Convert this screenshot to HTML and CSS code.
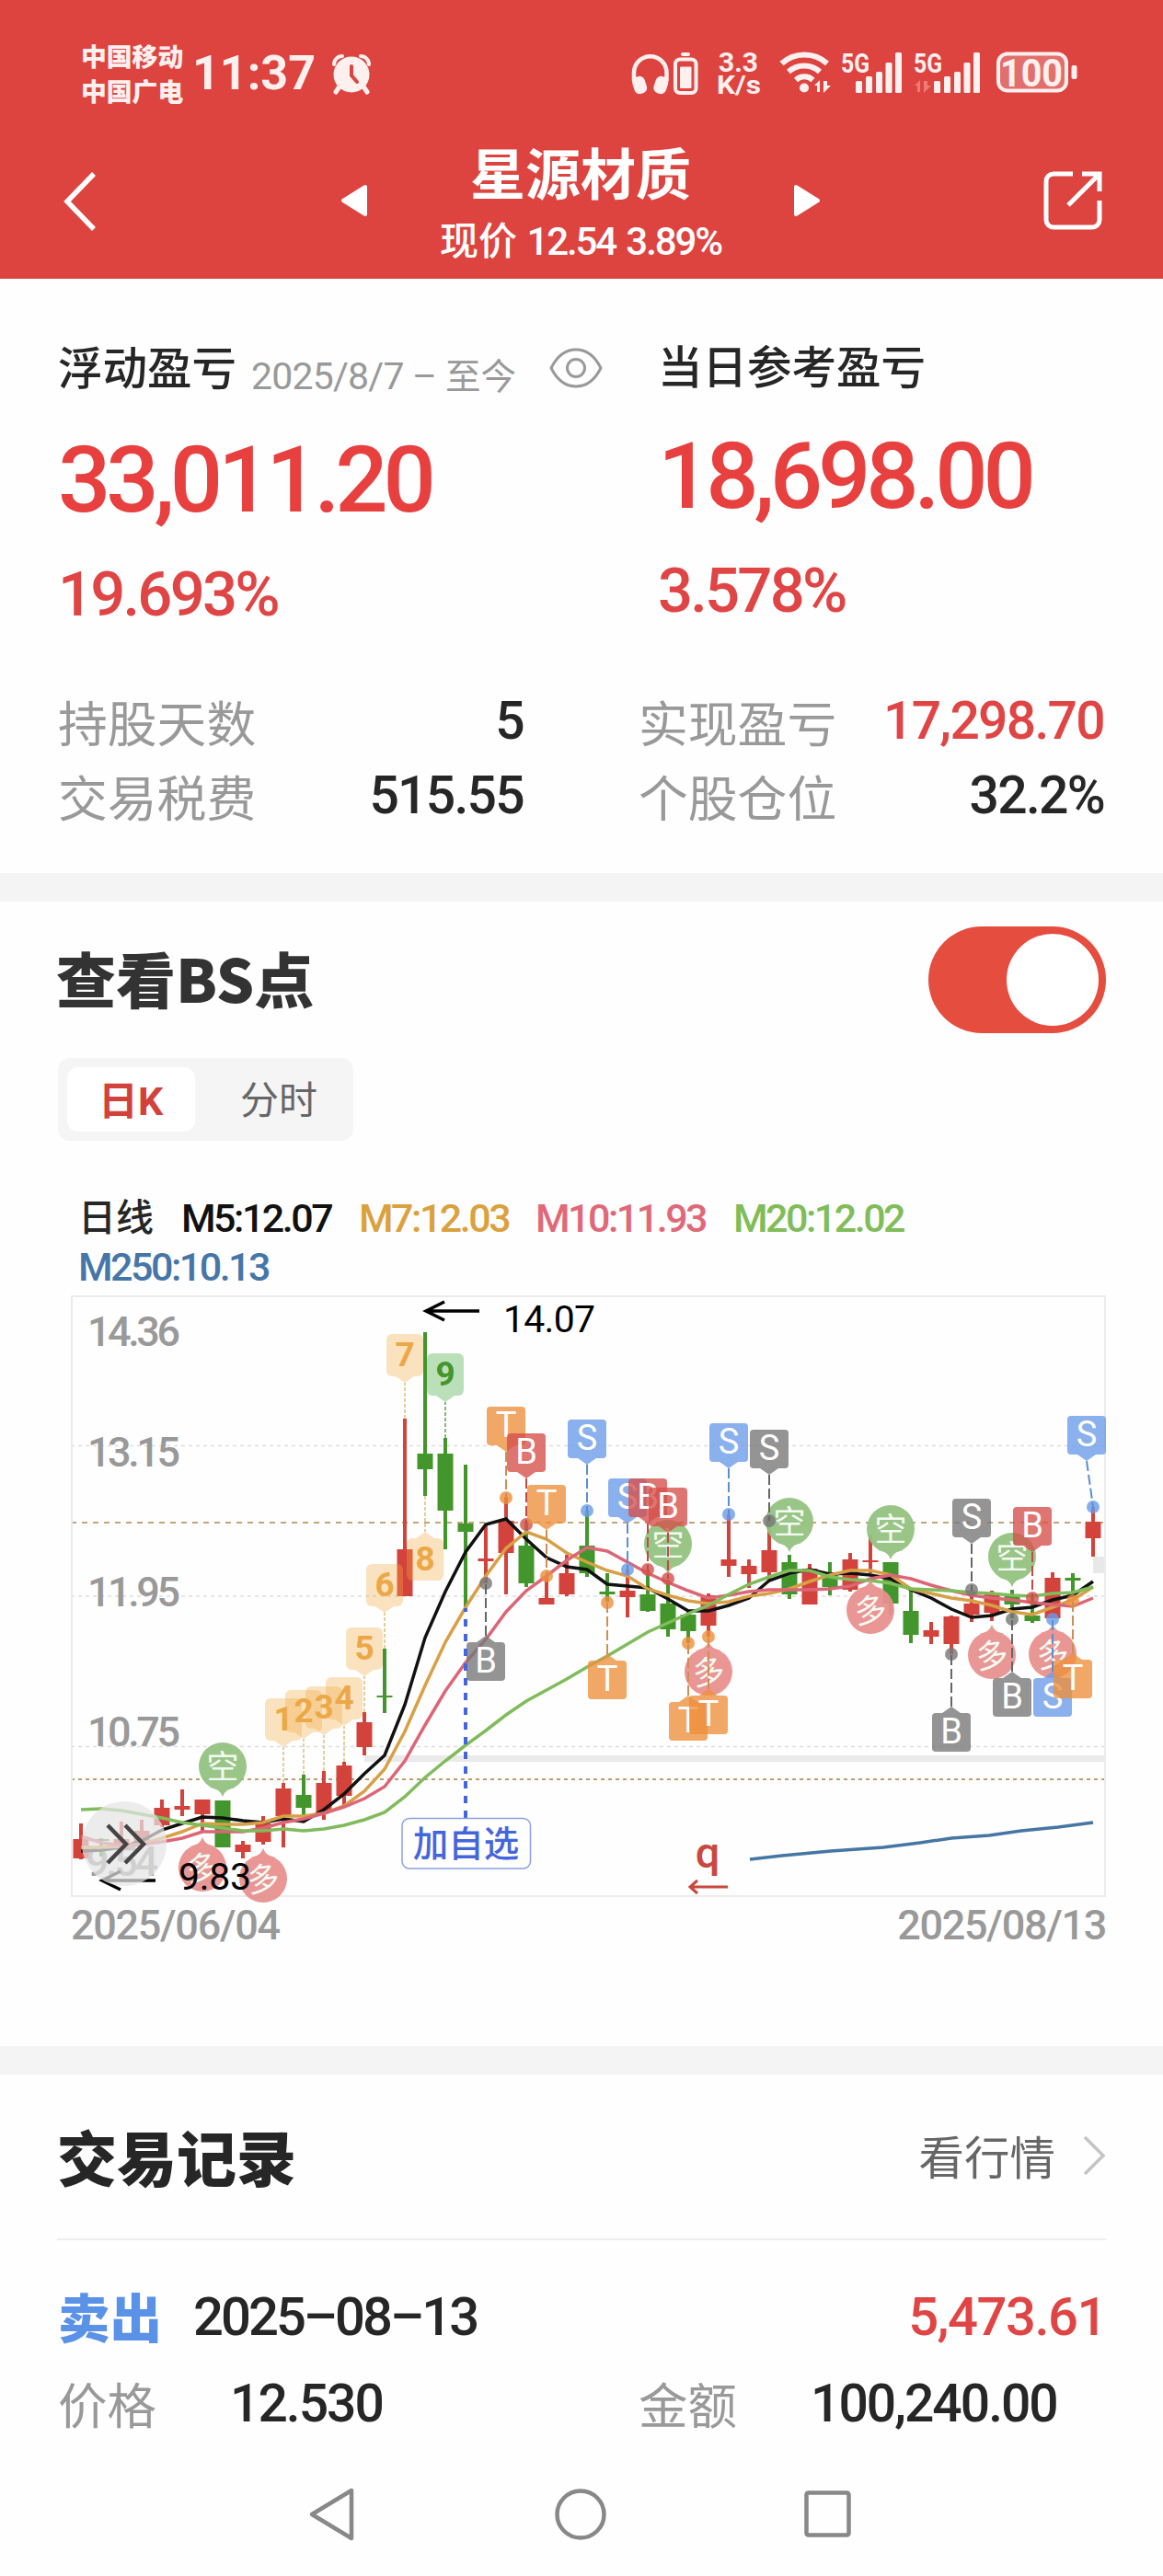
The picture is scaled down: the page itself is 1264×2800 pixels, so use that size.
FILE: index.html
```html
<!DOCTYPE html>
<html lang="zh-CN">
<head>
  <meta charset="UTF-8" />
  <meta name="viewport" content="width=device-width, initial-scale=1.0" />
  <title>星源材质</title>
  <link rel="stylesheet" href="styles.css">
</head>
<body>
  <header>
    <div class="status-bar">
      <div class="carriers">
        <p>中国移动</p>
        <p>中国广电</p>
      </div>
      <span class="clock">11:37</span>
      <svg class="alarm" width="44" height="44" viewBox="0 0 44 44">
        <path d="M3 11a9 9 0 0 1 9-9M32 2a9 9 0 0 1 9 9" fill="none" stroke="#fff0f0" stroke-width="4" stroke-linecap="round"/>
        <path d="M9 35l-4 6M35 35l4 6" stroke="#fff0f0" stroke-width="5" stroke-linecap="round"/>
        <circle cx="22" cy="22" r="19.5" fill="#fff0f0"/>
        <path d="M22 13v10l6 7" fill="none" stroke="#dd4440" stroke-width="4" stroke-linecap="round"/>
      </svg>
      <div class="status-right">
        <svg class="status-icons" width="490" height="50" viewBox="684 54 490 50">
          <g fill="none" stroke="#fff0f0">
            <path d="M689 88v-9a17.500 17.500 0 0 1 35.500 0v9" stroke-width="4.500"/>
            <rect x="734" y="64.500" width="22.500" height="36.500" rx="5" stroke-width="4"/>
            <path d="M849.500 69a37 37 0 0 1 49.500 0M857 78a25.500 25.500 0 0 1 34 0M865 87a13.500 13.500 0 0 1 18.500 0" stroke-width="6"/>
          </g>
          <g fill="#fff0f0">
            <rect x="688" y="83" width="14" height="19" rx="6" transform="rotate(-18 695 92)"/>
            <rect x="711.500" y="83" width="14" height="19" rx="6" transform="rotate(18 718.500 92)"/>
            <rect x="740" y="57" width="10" height="4" rx="2"/>
            <rect x="739" y="72.500" width="12.500" height="23.500" rx="1"/>
            <circle cx="874" cy="95.500" r="5"/>
            <path d="M885 93l6-6v13h-3v-7zM895 88v13l8-8h-4v-5z"/>
            <rect x="930" y="88" width="7" height="13" rx="1.500"/>
            <rect x="941" y="83" width="7" height="18" rx="1.500"/>
            <rect x="952" y="78" width="7" height="23" rx="1.500"/>
            <rect x="962.500" y="68" width="7" height="33" rx="1.500"/>
            <rect x="973" y="57" width="7" height="44" rx="1.500"/>
            <rect x="1015" y="88" width="7" height="13" rx="1.500"/>
            <rect x="1026" y="83" width="7" height="18" rx="1.500"/>
            <rect x="1037" y="78" width="7" height="23" rx="1.500"/>
            <rect x="1047.500" y="68" width="7" height="33" rx="1.500"/>
            <rect x="1058" y="57" width="7" height="44" rx="1.500"/>
            <rect x="1164.500" y="71" width="6" height="15" rx="2"/>
          </g>
          <path d="M994 93l6-6v13h-3v-7zM1004 88v13l8-8h-4v-5z" fill="#ee7b78"/>
          <rect x="1085" y="58.500" width="74" height="40" rx="10" fill="#e26f6c" stroke="#fff0f0" stroke-width="4"/>
          <g class="status-text">
            <text x="781" y="77.500" font-size="29" textLength="43" lengthAdjust="spacingAndGlyphs">3.3</text>
            <text x="779" y="101.500" font-size="28" textLength="48" lengthAdjust="spacingAndGlyphs">K/s</text>
            <text x="914" y="78.500" font-size="30" textLength="31" lengthAdjust="spacingAndGlyphs">5G</text>
            <text x="993" y="78.500" font-size="30" textLength="31" lengthAdjust="spacingAndGlyphs">5G</text>
            <text x="1087" y="94" font-size="42" textLength="68" lengthAdjust="spacingAndGlyphs">100</text>
          </g>
        </svg>
      </div>
    </div>
    <nav class="title-bar">
      <svg class="back" width="36" height="64" viewBox="0 0 36 64"><path d="M33 2L4 32l29 30" fill="none" stroke="#fff" stroke-width="5.500"/></svg>
      <svg class="prev" width="30" height="36" viewBox="0 0 30 36"><path d="M27 3v30L3 18z" fill="#fff" stroke="#fff" stroke-width="4" stroke-linejoin="round"/></svg>
      <div class="stock">
        <h1>星源材质</h1>
        <p>现价 <span>12.54 3.89%</span></p>
      </div>
      <svg class="next" width="30" height="36" viewBox="0 0 30 36"><path d="M3 3v30l24-15z" fill="#fff" stroke="#fff" stroke-width="4" stroke-linejoin="round"/></svg>
      <svg class="share" width="66" height="66" viewBox="0 0 66 66"><path d="M33 4H12a8 8 0 0 0-8 8v42a8 8 0 0 0 8 8h42a8 8 0 0 0 8-8V33M43 4h19v19M61 5L28 38" fill="none" stroke="#fff" stroke-width="5"/></svg>
    </nav>
  </header>

  <section class="profit">
    <div class="profit-top">
      <div class="profit-col">
        <p class="label">浮动盈亏 <span class="range"><span class="days">2025/8/7 –</span>至今</span>
          <svg class="eye" width="58" height="44" viewBox="0 0 58 44"><path d="M2 22C9 8 19 2 29 2s20 6 27 20c-7 14-17 20-27 20S9 36 2 22z" fill="none" stroke="#999" stroke-width="3"/><circle cx="29" cy="22" r="9.500" fill="none" stroke="#999" stroke-width="3"/></svg>
        </p>
        <p class="amount">33,011.20</p>
        <p class="percent">19.693%</p>
      </div>
      <div class="profit-col right">
        <p class="label">当日参考盈亏</p>
        <p class="amount">18,698.00</p>
        <p class="percent">3.578%</p>
      </div>
    </div>
    <div class="profit-grid">
      <p class="item"><span>持股天数</span><b>5</b></p>
      <p class="item"><span>实现盈亏</span><b class="up">17,298.70</b></p>
      <p class="item"><span>交易税费</span><b>515.55</b></p>
      <p class="item"><span>个股仓位</span><b>32.2%</b></p>
    </div>
  </section>

  <section class="bs">
    <div class="bs-head">
      <h2>查看BS点</h2>
      <div class="toggle"><i></i></div>
    </div>
    <div class="tabs">
      <span class="tab active">日K</span>
      <span class="tab">分时</span>
    </div>
    <div class="legend">
      <span class="name">日线</span>
      <span class="m5">M5:12.07</span>
      <span class="m7">M7:12.03</span>
      <span class="m10">M10:11.93</span>
      <span class="m20">M20:12.02</span>
      <span class="m250">M250:10.13</span>
    </div>
    <svg id="chart" class="chart" width="1264" height="660" viewBox="0 1404 1264 660"></svg>
    <div class="dates"><span>2025/06/04</span><span>2025/08/13</span></div>
  </section>

  <section class="records">
    <div class="records-head">
      <h2>交易记录</h2>
      <a class="more">看行情
        <svg width="26" height="44" viewBox="0 0 26 44"><path d="M3 2l20 20L3 42" fill="none" stroke="#c4c4c4" stroke-width="3.500"/></svg>
      </a>
    </div>
    <div class="record">
      <p class="record-top"><span class="sell">卖出</span><span class="date">2025–08–13</span><span class="gain">5,473.61</span></p>
      <div class="record-row">
        <p><span>价格</span><b>12.530</b></p>
        <p><span>金额</span><b>100,240.00</b></p>
      </div>
    </div>
  </section>

  <footer>
    <svg width="52" height="60" viewBox="0 0 52 60"><path d="M47 4v52L4 30z" fill="none" stroke="#888" stroke-width="4.500" stroke-linejoin="round"/></svg>
    <svg width="58" height="58" viewBox="0 0 58 58"><circle cx="29" cy="29" r="25.500" fill="none" stroke="#888" stroke-width="4.500"/></svg>
    <svg width="52" height="52" viewBox="0 0 52 52"><rect x="2.500" y="2.500" width="46" height="46" rx="2" fill="none" stroke="#888" stroke-width="4.500"/></svg>
  </footer>

  <script src="chart.js"></script>
</body>
</html>
```

FILE: styles.css
```css
* {
  box-sizing: border-box;
  margin: 0;
  padding: 0;
}
body {
  width: 1264px;
  height: 2800px;
  overflow: hidden;
  background: #fefefe;
  color: #262626;
  font-family: Roboto, 'Noto Sans CJK SC', sans-serif;
  display: flex;
  flex-direction: column;
}
svg {
  display: block;
  flex: none;
  overflow: visible;
}
p, span, b, a, h1, h2 {
  white-space: nowrap;
}

/* header */
header {
  height: 303px;
  flex: none;
  background: #dd4440;
  color: #fff;
}
.status-bar {
  height: 120px;
  padding: 42px 90px 0 88px;
  display: flex;
  align-items: flex-start;
  color: #fff0f0;
}
.carriers {
  width: 112px;
  padding-top: 2px;
  font-size: 27.8px;
  font-weight: 900;
  line-height: 38px;
}
.clock {
  width: 142px;
  margin-left: 9px;
  padding-top: 8px;
  font-size: 52px;
  font-weight: 700;
  line-height: 60px;
}
.alarm {
  margin: 17px 0 0 9px;
}
.status-right {
  margin-left: auto;
  padding-top: 12px;
}
.status-text {
  fill: #fff0f0;
  font-weight: 700;
}
.title-bar {
  height: 183px;
  padding: 0 65px 0 69px;
  display: flex;
  align-items: flex-start;
}
.back {
  margin-top: 67px;
}
.prev {
  margin: 80px 0 0 265px;
}
.stock {
  flex: 1;
  text-align: center;
}
.stock h1 {
  margin-top: 34px;
  font-size: 60px;
  font-weight: 700;
  line-height: 76px;
}
.stock p {
  margin-top: 8px;
  font-size: 42px;
  font-weight: 500;
  line-height: 50px;
}
.stock span {
  letter-spacing: -2.1px;
  word-spacing: 3px;
}
.next {
  margin: 80px 241px 0 0;
}
.share {
  margin-top: 65px;
}

/* profit */
.profit {
  height: 646px;
  flex: none;
}
.profit-top {
  height: 442px;
  padding-top: 68px;
  display: flex;
}
.profit-col {
  width: 652px;
  padding-left: 63px;
}
.profit-col.right .label {
  padding-top: 0;
}
.profit-col.right .amount {
  margin-top: 42px;
}
.label {
  display: flex;
  height: 60px;
  padding-top: 1px;
  font-size: 48.5px;
  font-weight: 500;
  line-height: 60px;
}
.range {
  margin: 7px 0 0 16px;
  color: #999;
  font-size: 38.5px;
  font-weight: 400;
}
.days {
  display: inline-block;
  width: 211px;
  font-size: 41px;
  letter-spacing: -0.8px;
}
.eye {
  margin: 6px 0 0 36px;
}
.amount {
  margin-top: 46px;
  color: #e83f3f;
  font-size: 101px;
  font-weight: 500;
  line-height: 90px;
  letter-spacing: -5.200px;
}
.percent {
  margin-top: 49px;
  color: #e04545;
  font-size: 67px;
  font-weight: 500;
  line-height: 60px;
  letter-spacing: -2.800px;
}
.profit-grid {
  display: grid;
  grid-template-columns: 506px 506px;
  column-gap: 125px;
  padding-left: 63px;
}
.item {
  display: flex;
  justify-content: space-between;
  height: 81px;
  line-height: 78px;
}
.item span {
  padding-top: 5px;
  color: #999;
  font-size: 53.8px;
}
.item b {
  font-size: 57px;
  font-weight: 500;
  letter-spacing: -1.700px;
}
.item .up {
  color: #e04545;
}

/* bs points */
.bs {
  height: 1275px;
  flex: none;
  border-top: 31px solid #f4f4f4;
}
.bs-head {
  height: 170px;
  padding: 27px 62px 0 61px;
  display: flex;
  justify-content: space-between;
}
.bs h2 {
  color: #333;
  font-family: 'Noto Sans CJK SC', sans-serif;
  font-size: 65px;
  font-weight: 900;
  line-height: 110px;
}
.toggle {
  width: 193px;
  height: 116px;
  padding: 8px;
  border-radius: 58px;
  background: #e54d3f;
}
.toggle i {
  display: block;
  width: 100px;
  height: 100px;
  margin-left: auto;
  border-radius: 50%;
  background: #fff;
}
.tabs {
  width: 321px;
  height: 90px;
  margin-left: 63px;
  padding: 10px;
  display: flex;
  border-radius: 13px;
  background: #f5f5f5;
}
.tab {
  padding-left: 49px;
  color: #666;
  font-size: 42px;
  line-height: 74px;
}
.tab.active {
  width: 139px;
  padding-left: 34px;
  border-radius: 12px;
  background: #fff;
  color: #d2423b;
  font-weight: 700;
  font-size: 43px;
}
.legend {
  height: 106px;
  margin: 58px 200px 0 85px;
  display: flex;
  flex-wrap: wrap;
  font-size: 43px;
  font-weight: 500;
  line-height: 53px;
  letter-spacing: -2.500px;
}
.legend .name {
  width: 112px;
  font-size: 41px;
  letter-spacing: 0;
}
.m5 {
  width: 193px;
  color: #111;
}
.m7 {
  width: 192px;
  color: #dba13f;
}
.m10 {
  width: 215px;
  color: #e06878;
}
.m20 {
  width: 190px;
  color: #80bd58;
}
.m250 {
  color: #4676a8;
}
.axis {
  fill: #999;
  font-size: 45px;
  font-weight: 500;
}
.dates {
  padding: 0 62px 0 77px;
  display: flex;
  justify-content: space-between;
  color: #999;
  font-size: 45px;
  font-weight: 500;
  line-height: 58px;
  letter-spacing: -1.300px;
}

/* records */
.records {
  flex: 1;
  border-top: 31px solid #f4f4f4;
}
.records-head {
  height: 180px;
  margin: 0 62px 0 62px;
  padding-bottom: 3px;
  display: flex;
  align-items: center;
  justify-content: space-between;
  border-bottom: 2px solid #efefef;
}
.records-head h2 {
  font-size: 65px;
  font-weight: 900;
}
.more {
  display: flex;
  align-items: center;
  gap: 29px;
  color: #666;
  font-size: 49.5px;
}
.record {
  padding: 43px 62px 0 63px;
}
.record-top {
  display: flex;
  height: 86px;
  font-size: 58px;
  line-height: 80px;
}
.sell {
  width: 147px;
  padding-top: 4px;
  color: #5a92e8;
  font-size: 56.5px;
  font-weight: 900;
}
.date {
  font-weight: 500;
  letter-spacing: -3px;
}
.gain {
  margin-left: auto;
  color: #e04545;
  font-weight: 500;
  letter-spacing: -1.500px;
}
.record-row {
  display: flex;
  line-height: 96px;
}
.record-row p {
  width: 631px;
  flex: none;
  display: flex;
}
.record-row span {
  width: 187px;
  padding-top: 5px;
  color: #999;
  font-size: 53.5px;
}
.record-row b {
  padding-top: 1px;
  font-size: 57px;
  font-weight: 500;
  letter-spacing: -2px;
}

footer {
  height: 136px;
  flex: none;
  padding: 0 338px 0 335px;
  display: flex;
  align-items: center;
  justify-content: space-between;
}
```

FILE: chart.js
```js
const RED = '#d4433b';
const GREEN = '#43962b';
const colX = i => 88 + 22 * i;

// [color, high, low, body top, body bottom]
const candles = [
  ['r', 1982, 2021, 1999, 2020], ['g', 1998, 2018, 1999, 2001], ['r', 1980, 2011, 1999, 2010],
  ['r', 1978, 2008, 1990, 2003], ['r', 1956, 1986, 1965, 1984], ['r', 1945, 1974, 1963, 1967],
  ['r', 1956, 1992, 1956, 1972], ['g', 1957, 2008, 1957, 2008], ['r', 2001, 2020, 2005, 2013],
  ['r', 1974, 2005, 1982, 2002], ['r', 1938, 2008, 1944, 1974], ['g', 1929, 1974, 1951, 1965],
  ['r', 1925, 1978, 1938, 1970], ['r', 1915, 1964, 1919, 1952], ['r', 1861, 1908, 1872, 1899],
  ['g', 1792, 1862, 1843, 1845], ['r', 1542, 1735, 1684, 1735], ['g', 1448, 1626, 1580, 1597],
  ['g', 1563, 1684, 1580, 1642], ['g', 1592, 1750, 1656, 1665], ['r', 1657, 1721, 1694, 1697],
  ['r', 1627, 1733, 1653, 1688], ['g', 1657, 1725, 1680, 1721], ['r', 1713, 1743, 1737, 1744],
  ['r', 1690, 1735, 1710, 1733], ['g', 1642, 1714, 1680, 1710], ['g', 1710, 1741, 1730, 1733],
  ['r', 1706, 1758, 1729, 1736], ['g', 1706, 1752, 1733, 1751], ['g', 1717, 1779, 1743, 1771],
  ['g', 1750, 1786, 1755, 1773], ['r', 1732, 1779, 1734, 1767], ['r', 1646, 1714, 1695, 1702],
  ['r', 1695, 1726, 1702, 1711], ['r', 1653, 1717, 1685, 1709], ['g', 1690, 1738, 1698, 1733],
  ['r', 1700, 1744, 1705, 1744], ['g', 1698, 1734, 1710, 1725], ['r', 1688, 1730, 1695, 1728],
  ['r', 1668, 1710, 1696, 1698], ['g', 1698, 1756, 1698, 1743], ['g', 1728, 1786, 1751, 1777],
  ['r', 1763, 1787, 1772, 1779], ['r', 1756, 1798, 1757, 1787], ['r', 1728, 1763, 1743, 1755],
  ['r', 1729, 1762, 1731, 1753], ['g', 1728, 1759, 1735, 1744], ['g', 1737, 1764, 1756, 1762],
  ['r', 1709, 1759, 1715, 1759], ['g', 1710, 1733, 1715, 1718], ['r', 1638, 1692, 1654, 1672]
];

const averages = {
  '#111': [2012, 2011, 2008, 2001, 1989, 1982, 1975, 1976, 1979, 1981, 1977, 1980, 1967, 1950, 1928, 1908, 1853, 1780, 1730, 1687, 1657, 1651, 1673, 1693, 1703, 1706, 1722, 1724, 1726, 1738, 1751, 1751, 1745, 1737, 1718, 1710, 1706, 1711, 1710, 1712, 1716, 1728, 1737, 1749, 1758, 1756, 1749, 1747, 1739, 1734, 1719],
  '#d8a046': [2008, 2008, 2007, 2004, 1998, 1991, 1982, 1983, 1983, 1981, 1974, 1974, 1971, 1963, 1947, 1923, 1882, 1832, 1785, 1747, 1713, 1683, 1665, 1673, 1688, 1698, 1707, 1713, 1727, 1734, 1740, 1743, 1741, 1735, 1732, 1727, 1719, 1712, 1707, 1707, 1712, 1727, 1732, 1737, 1740, 1745, 1752, 1755, 1747, 1739, 1725],
  '#dc6676': [1996, 2003, 2006, 2005, 2002, 1998, 1991, 1991, 1991, 1987, 1981, 1977, 1971, 1964, 1955, 1942, 1914, 1875, 1838, 1807, 1782, 1752, 1729, 1713, 1696, 1682, 1686, 1698, 1710, 1720, 1729, 1737, 1734, 1730, 1728, 1728, 1728, 1727, 1724, 1716, 1712, 1716, 1723, 1729, 1734, 1737, 1739, 1742, 1744, 1746, 1737],
  '#80bb5c': [1967, 1966, 1968, 1972, 1976, 1981, 1984, 1987, 1990, 1990, 1988, 1990, 1988, 1984, 1978, 1970, 1953, 1932, 1914, 1897, 1881, 1864, 1849, 1837, 1825, 1812, 1800, 1787, 1774, 1764, 1754, 1745, 1733, 1722, 1714, 1707, 1707, 1714, 1717, 1718, 1721, 1727, 1728, 1729, 1731, 1732, 1734, 1735, 1732, 1731, 1725]
};

// [number, column, anchor y, below]
const counts = [
  [1, 10, 1938], [2, 11, 1929], [3, 12, 1925], [4, 13, 1915], [5, 14, 1861],
  [6, 15, 1792], [7, 16, 1542], [8, 17, 1626, true], [9, 18, 1563]
];

// [text, column, tip y, below]
const pins = [
  ['空', 7, 1953], ['空', 29, 1711], ['空', 35, 1687], ['空', 40, 1695], ['空', 46, 1725],
  ['多', 6, 1997, true], ['多', 9, 2009, true], ['多', 31, 1784, true],
  ['多', 39, 1717, true], ['多', 45, 1766, true], ['多', 48, 1765, true]
];

// [letter, color, column, dot y, box top, box center x]
const marks = [
  ['T', 'orange', 21, 1628, 1529], ['B', 'red', 22, 1657, 1558], ['T', 'orange', 23, 1713, 1614],
  ['S', 'blue', 25, 1642, 1543], ['T', 'orange', 26, 1742, 1805], ['S', 'blue', 27, 1706, 1607],
  ['B', 'red', 28, 1706, 1607], ['B', 'red', 29, 1716, 1617], ['T', 'orange', 30, 1786, 1850],
  ['T', 'orange', 31, 1779, 1843], ['S', 'blue', 32, 1646, 1547], ['S', 'gray', 34, 1653, 1554],
  ['B', 'gray', 20, 1721, 1785], ['B', 'gray', 43, 1798, 1862], ['S', 'gray', 44, 1728, 1629],
  ['B', 'gray', 46, 1760, 1824], ['B', 'red', 47, 1737, 1638], ['S', 'blue', 48, 1760, 1824],
  ['T', 'orange', 49, 1740, 1804], ['S', 'blue', 50, 1638, 1539, 1181]
];
const markColors = {
  orange: ['#ed8f3c', '#cf8f52'],
  red: ['#d5504b', '#c14a46'],
  blue: ['#6a9be8', '#5b8fd0'],
  gray: ['#777', '#666']
};

let out = '';
const line = (x1, y1, x2, y2, color, width, dash = '') =>
  `<line x1="${x1}" y1="${y1}" x2="${x2}" y2="${y2}" stroke="${color}" stroke-width="${width}" stroke-dasharray="${dash}"/>`;
const text = (x, y, size, color, value, more = '') =>
  `<text x="${x}" y="${y}" font-size="${size}" fill="${color}" ${more}>${value}</text>`;

function drawFrame() {
  out += '<rect x="396" y="1908" width="806" height="7" fill="#eaeaea"/>';
  out += '<rect x="1188" y="1692" width="14" height="18" fill="#e8e8e8"/>';
  [1571.5, 1735, 1898.5].forEach(y => out += line(77, y, 1202, y, '#ddd', 1.5, '4 4'));
  out += line(77, 1655, 1202, 1655, '#c0a678', 2, '6 6');
  out += line(77, 1934, 1202, 1934, '#c39a6c', 2, '4 4');
  out += '<rect x="78" y="1409" width="1123" height="652" fill="none" stroke="#ebebeb" stroke-width="2"/>';
  [['14.36', 1463], ['13.15', 1594], ['11.95', 1746], ['10.75', 1898]].forEach(([v, y]) =>
    out += `<text class="axis" x="95" y="${y}" textLength="101">${v}</text>`);
  out += '<text class="axis" x="93" y="2039" textLength="79">9.54</text>';
}

function drawCandles() {
  candles.forEach(([c, high, low, top, bottom], i) => {
    const color = c === 'r' ? RED : GREEN;
    out += line(colX(i), high, colX(i), low, color, 4);
    out += `<rect x="${colX(i) - 8.5}" y="${top}" width="17" height="${bottom - top}" fill="${color}"/>`;
  });
}

function drawCounts() {
  counts.forEach(([n, i, y, below]) => {
    const x = colX(i);
    const d = below ? 1 : -1;
    const green = n === 9;
    const tip = y + 39 * d;
    const top = below ? tip + 7 : tip - 53;
    const base = below ? top : top + 46;
    out += line(x, y, x, tip, green ? '#86b97c' : '#e2cf9c', 2, '4 2');
    out += `<g fill="${green ? '#66bb63' : '#f3a93f'}" fill-opacity="${green ? 0.44 : 0.33}">
      <path d="M${x - 14} ${top}H${x + 14}a6 6 0 0 1 6 6v34a6 6 0 0 1 -6 6H${x - 14}a6 6 0 0 1 -6 -6v-34a6 6 0 0 1 6 -6z"/>
      <path d="M${x - 10} ${base}H${x + 10}L${x} ${tip}z"/></g>`;
    out += text(x, top + 35, 37, green ? '#43962b' : '#eca746', n, 'font-weight="700" text-anchor="middle"');
  });
}

function drawPins() {
  pins.forEach(([value, i, tip, below]) => {
    const x = colX(i);
    const d = below ? 1 : -1;
    const cy = tip + 33 * d;
    const color = below ? '#e8918f' : '#94c281';
    out += `<g opacity=".95"><circle cx="${x}" cy="${cy}" r="26" fill="${color}"/>
      <path d="M${x} ${tip}q3 ${9 * d} 14 ${10 * d}h-28q11 ${-1 * d} 14 ${-10 * d}z" fill="${color}"/></g>`;
    out += text(x, cy + 13, 35, '#f4faf2', value, `text-anchor="middle" ${below ? `transform="rotate(-8 ${x} ${cy})"` : ''}`);
  });
}

function drawMarks() {
  marks.forEach(([letter, name, i, dot, top, center]) => {
    const x = colX(i);
    const bx = center || x;
    const below = top > dot;
    const base = below ? top : top + 42;
    const tip = below ? top - 7 : top + 49;
    const [fill, stroke] = markColors[name];
    out += `<circle cx="${x}" cy="${dot}" r="7" fill="${fill}" fill-opacity=".8"/>`;
    out += line(bx, tip, x, dot, stroke, 2, '11 4');
    out += `<g fill="${fill}" fill-opacity=".79"><rect x="${bx - 21}" y="${top}" width="42" height="42" rx="4"/>
      <path d="M${bx - 10} ${base}h20L${bx} ${tip}z"/></g>`;
    out += text(bx, top + 33, 38, '#fff', letter, 'text-anchor="middle"');
  });
}

function drawLabels() {
  out += line(506, 1976, 506, 1748, '#4565dd', 4, '8 8');
  out += '<rect x="437" y="1976.500" width="139.500" height="54.500" rx="8" fill="#fff" stroke="#8aa0e0" stroke-width="1.500"/>';
  out += text(506.5, 2018, 38.5, '#4565dd', '加自选', 'font-weight="500" text-anchor="middle"');
  out += '<path d="M521 1425H463M483 1415l-20 10l20 10" fill="none" stroke="#000" stroke-width="3.500"/>';
  out += text(547, 1447.5, 41, '#000', '14.07', 'textLength="100"');
  out += '<path d="M169 2044H111M131 2034l-20 10l20 10" fill="none" stroke="#000" stroke-width="3.500"/>';
  out += text(194, 2053.5, 41, '#000', '9.83', 'textLength="79"');
  out += text(769, 2030, 47, '#c9483f', 'q', 'font-weight="500" text-anchor="middle"');
  out += '<path d="M791 2051H750M758 2044l-8 7l8 7" fill="none" stroke="#c9483f" stroke-width="3"/>';
  out += '<circle cx="135" cy="2004" r="46" fill="#e4e4e4" fill-opacity=".72"/>';
  out += '<path d="M117 1984l20 20.500l-20 20.500M136 1984l20 20.500l-20 20.500" fill="none" stroke="#444" stroke-width="4.500"/>';
}

drawFrame();
drawCandles();
out += '<polyline points="815,2021 850,2017 903,2012 960,2008 1000,2003 1034,1998 1075,1995 1110,1990 1150,1986 1188,1981" fill="none" stroke="#4676a3" stroke-width="3.500"/>';
for (const color in averages) {
  const points = averages[color].map((y, i) => colX(i) + ',' + y).join(' ');
  out += `<polyline points="${points}" fill="none" stroke="${color}" stroke-width="3.500"/>`;
}
drawCounts();
drawPins();
drawMarks();
drawLabels();
document.getElementById('chart').innerHTML = out;
```
